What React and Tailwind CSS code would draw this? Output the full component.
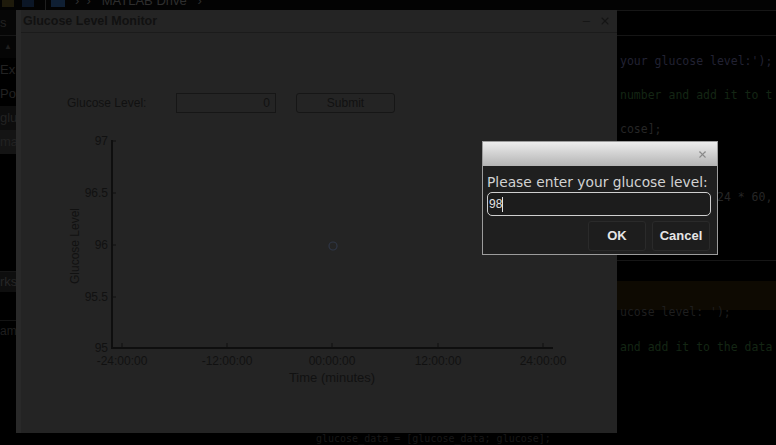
import { X } from "lucide-react";

const leftRows = [
  { label: "s", h: "h-[26px]", bg: "bg-[#060606]", border: "border-b border-[#161616]" },
  { label: "▲", h: "h-[22px]", bg: "bg-[#050505]", border: "", center: true },
  { label: "Ex", h: "h-[24px]", bg: "", border: "" },
  { label: "Po", h: "h-[24px]", bg: "", border: "" },
  { label: "glu", h: "h-[24px]", bg: "bg-[#0d0d0d]", border: "" },
  { label: "ma", h: "h-[24px]", bg: "bg-[#141414]", border: "" },
];

const xTicks = [
  { x: 66, label: "-24:00:00" },
  { x: 171, label: "-12:00:00" },
  { x: 276, label: "00:00:00" },
  { x: 382, label: "12:00:00" },
  { x: 487, label: "24:00:00" },
];

const yTicks = [
  { y: 11, label: "97" },
  { y: 63, label: "96.5" },
  { y: 115, label: "96" },
  { y: 167, label: "95.5" },
  { y: 218, label: "95" },
];

function GlucoseChart() {
  return (
    <svg width="520" height="260" className="block">
      {/* axes */}
      <line x1="56" y1="10" x2="56" y2="219" stroke="#0e0e0e" strokeWidth="2" />
      <line x1="55" y1="218" x2="497" y2="218" stroke="#0e0e0e" strokeWidth="2" />
      {yTicks.map((t) => (
        <g key={t.label}>
          <line x1="56" y1={t.y} x2="60" y2={t.y} stroke="#0e0e0e" strokeWidth="1" />
          <text x="52" y={t.y + 4} textAnchor="end" fontSize="12" fill="#111">
            {t.label}
          </text>
        </g>
      ))}
      {xTicks.map((t) => (
        <g key={t.label}>
          <line x1={t.x} y1="218" x2={t.x} y2="213" stroke="#0e0e0e" strokeWidth="1" />
          <text x={t.x} y="235" textAnchor="middle" fontSize="12" fill="#111">
            {t.label}
          </text>
        </g>
      ))}
      <text x="276" y="252" textAnchor="middle" fontSize="13" fill="#111">
        Time (minutes)
      </text>
      <text
        x="0"
        y="0"
        fontSize="12"
        fill="#111"
        textAnchor="middle"
        transform="translate(23 116) rotate(-90)"
      >
        Glucose Level
      </text>
      {/* data point */}
      <circle cx="277" cy="116" r="4" fill="none" stroke="#2f3646" strokeWidth="1.2" />
    </svg>
  );
}

function CodeLine({ children, color = "text-[#262626]", pad = "pl-[3px]", extra = "" }) {
  return (
    <div className={`h-[17px] leading-[17px] whitespace-nowrap ${pad} ${color} ${extra}`}>
      {children}
    </div>
  );
}

export default function App() {
  return (
    <div className="relative w-[776px] h-[445px] overflow-hidden bg-black font-['Liberation_Sans',Arial,sans-serif]">
      {/* toolbar strip, mostly cut off */}
      <div className="h-[10px] flex items-end overflow-hidden bg-[#030303]">
        <div className="ml-[2px] w-[12px] h-[7px] self-start bg-[#1e1a0b]" />
        <div className="ml-[8px] w-[12px] h-[7px] self-start bg-[#0b1626]" />
        <div className="ml-[11px] w-px h-[10px] bg-[#1e1e1e]" />
        <div className="ml-[5px] w-[14px] h-[7px] self-start bg-[#0f1f33]" />
        <div className="ml-[10px] h-[10px] relative w-[130px]">
          <span className="absolute left-0 -top-[9px] text-[13px] text-[#2e2e2e] whitespace-nowrap">
            ›&nbsp;&nbsp;›&nbsp;&nbsp;&nbsp;MATLAB Drive&nbsp;&nbsp;&nbsp;›
          </span>
        </div>
      </div>

      <div className="flex h-[435px]">
        {/* left panel */}
        <div className="w-[16px] shrink-0 flex flex-col overflow-hidden text-[13px]">
          {leftRows.map((r, i) => (
            <div
              key={i}
              className={`${r.h} ${r.bg} ${r.border} flex items-center whitespace-nowrap ${
                r.center ? "justify-center text-[8px] text-[#1e1e1e]" : "text-[#222]"
              }`}
            >
              {r.label}
            </div>
          ))}
          <div className="h-[117px]" />
          <div className="h-[21px] bg-[#0e0e0e] border-t border-[#161616] flex items-center text-[#262626] whitespace-nowrap">
            rks
          </div>
          <div className="h-[29px] border-b border-[#131313]" />
          <div className="h-[20px] flex items-center text-[#1f1f1f] text-[12px]">am</div>
        </div>

        {/* centre (hidden behind the figure) */}
        <div className="w-[601px] shrink-0 flex flex-col justify-end">
          <div className="ml-[300px] text-[10px] leading-[12px] text-[#181818] font-['DejaVu_Sans_Mono',monospace] whitespace-nowrap">
            glucose_data = [glucose_data; glucose];
          </div>
        </div>

        {/* editor on the right */}
        <div className="flex-1 min-w-0 overflow-hidden flex flex-col border-t border-[#161616] text-[11.5px] font-['DejaVu_Sans_Mono',monospace]">
          <div className="h-[25px] shrink-0 border-b border-[#151515]" />
          <CodeLine />
          <CodeLine color="text-[#222233]">your glucose level:');</CodeLine>
          <CodeLine />
          <CodeLine color="text-[#142614]">number and add it to t</CodeLine>
          <CodeLine />
          <CodeLine>cose];</CodeLine>
          <CodeLine />
          <CodeLine />
          <CodeLine />
          <CodeLine pad="pl-[100px]">24 * 60, 1);</CodeLine>
          <CodeLine />
          <CodeLine />
          <CodeLine />
          <div className="h-[4px] shrink-0 border-b border-[#161616]" />
          <div className="h-[20px] shrink-0" />
          <div className="h-[29px] shrink-0 bg-[#0e0a02]" />
          <CodeLine color="text-[#1e1e1e]" extra="-mt-[6px]">ucose level: ');</CodeLine>
          <CodeLine />
          <CodeLine color="text-[#142614]" extra="mt-[1px]">and add it to the data</CodeLine>
        </div>
      </div>

      {/* figure window */}
      <div className="absolute left-[16px] top-[10px] w-[601px] h-[423px] bg-[#242424] border-l-[5px] border-[#292929] flex flex-col">
        <div className="h-[23px] border-b border-[#1b1b1b] flex items-center pl-[2px] pr-[6px]">
          <span className="text-[12.5px] font-bold text-[#111]">Glucose Level Monitor</span>
          <span className="ml-auto text-[13px] text-[#151515]">–</span>
          <X className="ml-[9px] w-[12px] h-[12px] text-[#151515]" strokeWidth={2.2} />
        </div>
        <div className="flex items-center mt-[60px] ml-[46px] h-[20px] text-[12px] text-[#111]">
          <span className="w-[109px]">Glucose Level:</span>
          <div className="w-[100px] h-[20px] border border-[#161616] flex items-center justify-end pr-[5px]">
            0
          </div>
          <button className="ml-[20px] w-[99px] h-[20px] border border-[#161616] rounded-[3px] text-[12px] text-[#111]">
            Submit
          </button>
        </div>
        <div className="mt-[17px] ml-[35px]">
          <GlucoseChart />
        </div>
      </div>

      {/* input dialog */}
      <div className="absolute left-[482px] top-[141px] w-[236px] h-[114px] border border-[#9c9c9c] bg-[#1f1f1f] flex flex-col">
        <div className="h-[24px] bg-linear-to-b from-[#ededed] to-[#b4b4b4] flex items-center justify-end pr-[9px]">
          <X className="w-[11px] h-[11px] text-[#8a8a8a]" strokeWidth={2.4} />
        </div>
        <div className="px-[4px] pt-[8px] flex flex-col">
          <span className="text-[13.8px] leading-[17px] text-[#d2d2d2] font-['DejaVu_Sans',sans-serif]">
            Please enter your glucose level:
          </span>
          <div className="mt-[1px] w-[224px] h-[24px] border border-[#cfcfcf] rounded-[5px] bg-[#1c1c1c] flex items-center pl-[1px] text-[12px] text-[#e2e2e2]">
            98<span className="w-px h-[15px] bg-[#e2e2e2]" />
          </div>
          <div className="mt-[5px] flex justify-end gap-[6px] pr-[3px]">
            <button className="w-[58px] h-[30px] border border-[#2a2a2a] rounded-[3px] bg-[#1d1d1d] text-[13px] font-bold text-[#e6e6e6]">
              OK
            </button>
            <button className="w-[58px] h-[30px] border border-[#2a2a2a] rounded-[3px] bg-[#1d1d1d] text-[13px] font-bold text-[#e6e6e6]">
              Cancel
            </button>
          </div>
        </div>
      </div>
    </div>
  );
}
